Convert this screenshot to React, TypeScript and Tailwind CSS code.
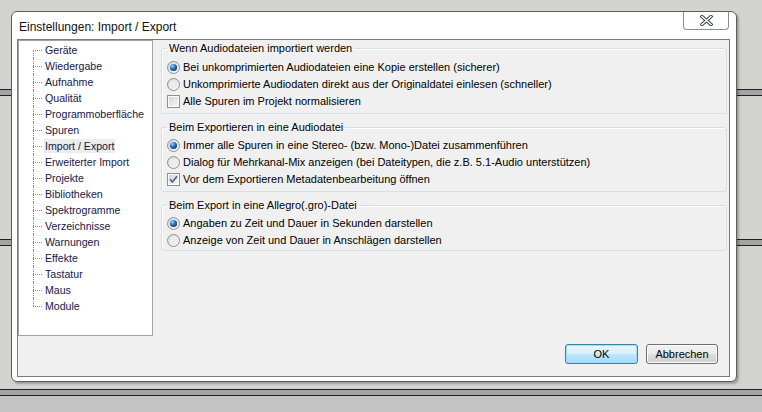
const treeItems = [
  "Geräte",
  "Wiedergabe",
  "Aufnahme",
  "Qualität",
  "Programmoberfläche",
  "Spuren",
  "Import / Export",
  "Erweiterter Import",
  "Projekte",
  "Bibliotheken",
  "Spektrogramme",
  "Verzeichnisse",
  "Warnungen",
  "Effekte",
  "Tastatur",
  "Maus",
  "Module",
]

const font = "font-['Liberation_Sans',Arial,sans-serif]"

function Radio({ checked }: { checked?: boolean }) {
  return (
    <svg width="13" height="13" viewBox="0 0 13 13" className="shrink-0">
      <defs>
        <linearGradient id="radio-bg" x1="0" y1="0" x2="1" y2="1">
          <stop offset="0" stopColor="#d6d6d6" />
          <stop offset="1" stopColor="#fbfbfb" />
        </linearGradient>
        <radialGradient id="radio-dot" cx="0.35" cy="0.3" r="0.8">
          <stop offset="0" stopColor="#9fd6fb" />
          <stop offset="0.45" stopColor="#2a79c2" />
          <stop offset="1" stopColor="#0b3462" />
        </radialGradient>
      </defs>
      <circle cx="6.5" cy="6.5" r="6" fill="url(#radio-bg)" stroke="#8f9090" />
      {checked ? (
        <circle cx="6.5" cy="6.5" r="3.6" fill="url(#radio-dot)" />
      ) : (
        <circle cx="6.5" cy="6.5" r="3.8" fill="#ececec" />
      )}
    </svg>
  )
}

function Checkbox({ checked }: { checked?: boolean }) {
  return (
    <svg width="13" height="13" viewBox="0 0 13 13" className="shrink-0">
      <defs>
        <linearGradient id="check-bg" x1="0" y1="0" x2="1" y2="1">
          <stop offset="0" stopColor="#d4d4d4" />
          <stop offset="1" stopColor="#f8f8f8" />
        </linearGradient>
      </defs>
      <rect x="0.5" y="0.5" width="12" height="12" fill="#fff" stroke="#8f9090" />
      <rect x="2" y="2" width="9" height="9" fill="url(#check-bg)" />
      {checked && (
        <path d="M3 6.2 L5.4 9 L10 3.2" fill="none" stroke="#4a5f9a" strokeWidth="1.7" />
      )}
    </svg>
  )
}

function Option({ kind, checked, label }: { kind: "radio" | "check"; checked?: boolean; label: string }) {
  return (
    <div className="flex h-[17px] items-center gap-[3px]">
      {kind === "radio" ? <Radio checked={checked} /> : <Checkbox checked={checked} />}
      <span className="whitespace-nowrap">{label}</span>
    </div>
  )
}

function Group({ title, className, children }: { title: string; className?: string; children: React.ReactNode }) {
  return (
    <fieldset
      className={`rounded-[3px] border border-[#d5dfe5] px-[5px] shadow-[inset_1px_1px_0_#ffffff] ${className ?? ""}`}
    >
      <legend className="px-[2px] leading-[15px]">{title}</legend>
      {children}
    </fieldset>
  )
}

function TreeRow({ label, first, last, selected }: { label: string; first: boolean; last: boolean; selected: boolean }) {
  return (
    <div className="flex h-[16px]">
      <div className="flex w-[10px] shrink-0 flex-col">
        <div className={`h-[8px] ${first ? "" : "border-l border-dotted border-[#8c8c8c]"}`} />
        <div
          className={`h-[8px] w-[9px] border-t border-dotted border-[#8c8c8c] ${last ? "" : "border-l"}`}
        />
      </div>
      <span
        className={`ml-[1px] self-center whitespace-nowrap px-[1px] leading-[14px] ${selected ? "bg-[#ececec]" : ""}`}
      >
        {label}
      </span>
    </div>
  )
}

function CloseGlyph() {
  return (
    <svg width="13" height="11" viewBox="0 0 13 11">
      <path d="M2 1.5 L11 9.5 M11 1.5 L2 9.5" stroke="#3c4148" strokeWidth="3.4" strokeLinecap="square" />
      <path d="M2 1.5 L11 9.5 M11 1.5 L2 9.5" stroke="#ffffff" strokeWidth="1.5" strokeLinecap="square" />
    </svg>
  )
}

function Stripe() {
  return (
    <div className="flex flex-col">
      <div className="h-[1px] bg-[#202020]" />
      <div className="h-[5px] bg-[#a4a4a4]" />
      <div className="h-[1px] bg-[#202020]" />
    </div>
  )
}

export default function App() {
  return (
    <div className={`relative h-[412px] w-[762px] overflow-hidden bg-[#d3d3cf] text-[11px] ${font}`}>
      {/* track separators of the main window behind the dialog */}
      <div className="flex flex-col">
        <div className="h-[89px]" />
        <Stripe />
        <div className="h-[143px]" />
        <Stripe />
        <div className="h-[143px]" />
        <Stripe />
        <div className="h-[16px] bg-[#c4c4c4]" />
      </div>

      <div className="absolute left-[11px] top-[11px] flex h-[371px] w-[726px] flex-col rounded-[6px] border border-[#5c5c5c] bg-white shadow-[2px_2px_2px_rgba(0,0,0,0.25)]">
        <div className="flex h-[27px] shrink-0">
          <span className="self-center pl-[7px] pt-[2px] text-[12px] text-[#111]">
            Einstellungen: Import / Export
          </span>
          <button className="ml-auto mr-[7px] flex h-[18px] w-[46px] items-center justify-center rounded-b-[4px] border-x border-b border-[#8a8d92] bg-white">
            <CloseGlyph />
          </button>
        </div>

        <div className="ml-[5px] mr-[7px] flex h-[338px] w-[713px] flex-col border border-[#7a7a7a] bg-[#f0f0f0] text-black">
          <div className="flex h-[296px]">
            <div className="w-[135px] shrink-0 border border-[#a3a3a3] bg-white pl-[14px] pt-[1px] text-[10.6px] text-[#161648]">
              {treeItems.map((item, i) => (
                <TreeRow
                  key={item}
                  label={item}
                  first={i === 0}
                  last={i === treeItems.length - 1}
                  selected={item === "Import / Export"}
                />
              ))}
            </div>

            <div className="flex flex-1 flex-col pl-[8px] pr-[2px]">
              <Group title="Wenn Audiodateien importiert werden" className="mt-[1px] pb-[3px]">
                <div className="pt-[3px]">
                  <Option kind="radio" checked label="Bei unkomprimierten Audiodateien eine Kopie erstellen (sicherer)" />
                  <Option kind="radio" label="Unkomprimierte Audiodaten direkt aus der Originaldatei einlesen (schneller)" />
                  <Option kind="check" label="Alle Spuren im Projekt normalisieren" />
                </div>
              </Group>

              <Group title="Beim Exportieren in eine Audiodatei" className="mt-[6px] pb-[3px]">
                <div className="pt-[2px]">
                  <Option kind="radio" checked label="Immer alle Spuren in eine Stereo- (bzw. Mono-)Datei zusammenführen" />
                  <Option kind="radio" label="Dialog für Mehrkanal-Mix anzeigen (bei Dateitypen, die z.B. 5.1-Audio unterstützen)" />
                  <Option kind="check" checked label="Vor dem Exportieren Metadatenbearbeitung öffnen" />
                </div>
              </Group>

              <Group title="Beim Export in eine Allegro(.gro)-Datei" className="mt-[6px] pb-[1px]">
                <div className="pt-[2px]">
                  <Option kind="radio" checked label="Angaben zu Zeit und Dauer in Sekunden darstellen" />
                  <Option kind="radio" label="Anzeige von Zeit und Dauer in Anschlägen darstellen" />
                </div>
              </Group>
            </div>
          </div>

          <div className="mt-[8px] flex justify-end gap-[8px] pr-[11px]">
            <button className="h-[20px] w-[73px] rounded-[3px] border border-[#3c7fb1] bg-[linear-gradient(to_bottom,#eaf6fd_0%,#d9f0fc_50%,#bee6fd_50%,#a7d9f5_100%)] shadow-[inset_0_0_0_1px_#9ee0fc]">
              OK
            </button>
            <button className="h-[20px] w-[72px] rounded-[3px] border border-[#707070] bg-[linear-gradient(to_bottom,#f2f2f2_0%,#ebebeb_50%,#dddddd_50%,#cfcfcf_100%)] shadow-[inset_0_0_0_1px_#fcfcfc]">
              Abbrechen
            </button>
          </div>
        </div>
      </div>
    </div>
  )
}
